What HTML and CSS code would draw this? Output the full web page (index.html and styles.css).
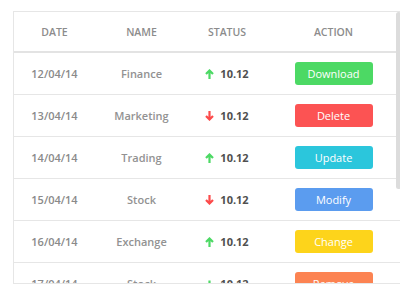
FILE: index.html
```html
<!DOCTYPE html>
<html lang="en">
<head>
    <meta charset="UTF-8">
    <meta name="viewport" content="width=device-width, initial-scale=1.0">
    <title>Transactions</title>
    <link rel="stylesheet" href="styles.css">
</head>
<body>
    <div class="table-box">
        <div class="row head">
            <div>Date</div>
            <div>Name</div>
            <div>Status</div>
            <div>Action</div>
        </div>

        <div class="row">
            <div class="date">12/04/14</div>
            <div class="name">Finance</div>
            <div class="status"><svg class="arrow up" viewBox="0 0 9 10"><path d="M4.5 10V1.5M1 5l3.5-3.5L8 5"/></svg>10.12</div>
            <div><button class="btn green">Download</button></div>
        </div>
        <div class="row">
            <div class="date">13/04/14</div>
            <div class="name">Marketing</div>
            <div class="status"><svg class="arrow down" viewBox="0 0 9 10"><path d="M4.5 0v8.5M1 5l3.5 3.5L8 5"/></svg>10.12</div>
            <div><button class="btn red">Delete</button></div>
        </div>
        <div class="row">
            <div class="date">14/04/14</div>
            <div class="name">Trading</div>
            <div class="status"><svg class="arrow up" viewBox="0 0 9 10"><path d="M4.5 10V1.5M1 5l3.5-3.5L8 5"/></svg>10.12</div>
            <div><button class="btn cyan">Update</button></div>
        </div>
        <div class="row">
            <div class="date">15/04/14</div>
            <div class="name">Stock</div>
            <div class="status"><svg class="arrow down" viewBox="0 0 9 10"><path d="M4.5 0v8.5M1 5l3.5 3.5L8 5"/></svg>10.12</div>
            <div><button class="btn blue">Modify</button></div>
        </div>
        <div class="row">
            <div class="date">16/04/14</div>
            <div class="name">Exchange</div>
            <div class="status"><svg class="arrow up" viewBox="0 0 9 10"><path d="M4.5 10V1.5M1 5l3.5-3.5L8 5"/></svg>10.12</div>
            <div><button class="btn yellow">Change</button></div>
        </div>
        <div class="row">
            <div class="date">17/04/14</div>
            <div class="name">Stock</div>
            <div class="status"><svg class="arrow up" viewBox="0 0 9 10"><path d="M4.5 10V1.5M1 5l3.5 3.5L8 5"/></svg>10.12</div>
            <div><button class="btn orange">Remove</button></div>
        </div>

        <!-- scrollbar thumb -->
        <div class="thumb"></div>
    </div>
</body>
</html>
```

FILE: styles.css
```css
* {
    margin: 0;
    padding: 0;
    box-sizing: border-box;
    font-family: 'Open Sans', sans-serif;
}

body {
    background: #fff;
    overflow: hidden;
    padding: 11px 0 0 13px;
}

.table-box {
    position: relative;
    width: 389px;
    height: 273px;
    border: 1px solid #e6e6e6;
    overflow: hidden;
}

.row {
    display: grid;
    grid-template-columns: 81px 93px 78px 135px;
    align-items: center;
    height: 42px;
    border-bottom: 1px solid #e6e6e6;
    text-align: center;
    font-size: 11px;
    font-weight: 600;
    color: #929292;
}

.row.head {
    height: 41px;
    border-bottom: 2px solid #e3e3e3;
    font-size: 10.5px;
    text-transform: uppercase;
    color: #8c8c8c;
}

.date {
    color: #8a8a8a;
}

.status {
    display: flex;
    justify-content: center;
    align-items: center;
    gap: 6px;
    font-weight: 700;
    color: #505050;
}

.arrow {
    width: 9px;
    height: 10px;
    fill: none;
    stroke-width: 2.2;
}

.arrow.up {
    stroke: #4cd964;
}

.arrow.down {
    stroke: #fc4b4b;
}

.btn {
    display: block;
    margin: 0 auto;
    width: 78px;
    height: 23px;
    border: none;
    border-radius: 3px;
    color: #fff;
    font-size: 11px;
}

.green { background: #4cd964; }
.red { background: #fc5353; }
.cyan { background: #2bc6dc; }
.blue { background: #5b9cef; }
.yellow { background: #fdd41b; }
.orange { background: #fc8352; }

.thumb {
    position: absolute;
    top: 0;
    left: 382px;
    width: 5px;
    height: 177px;
    border-radius: 3px;
    background: #dcdcdc;
}
```
